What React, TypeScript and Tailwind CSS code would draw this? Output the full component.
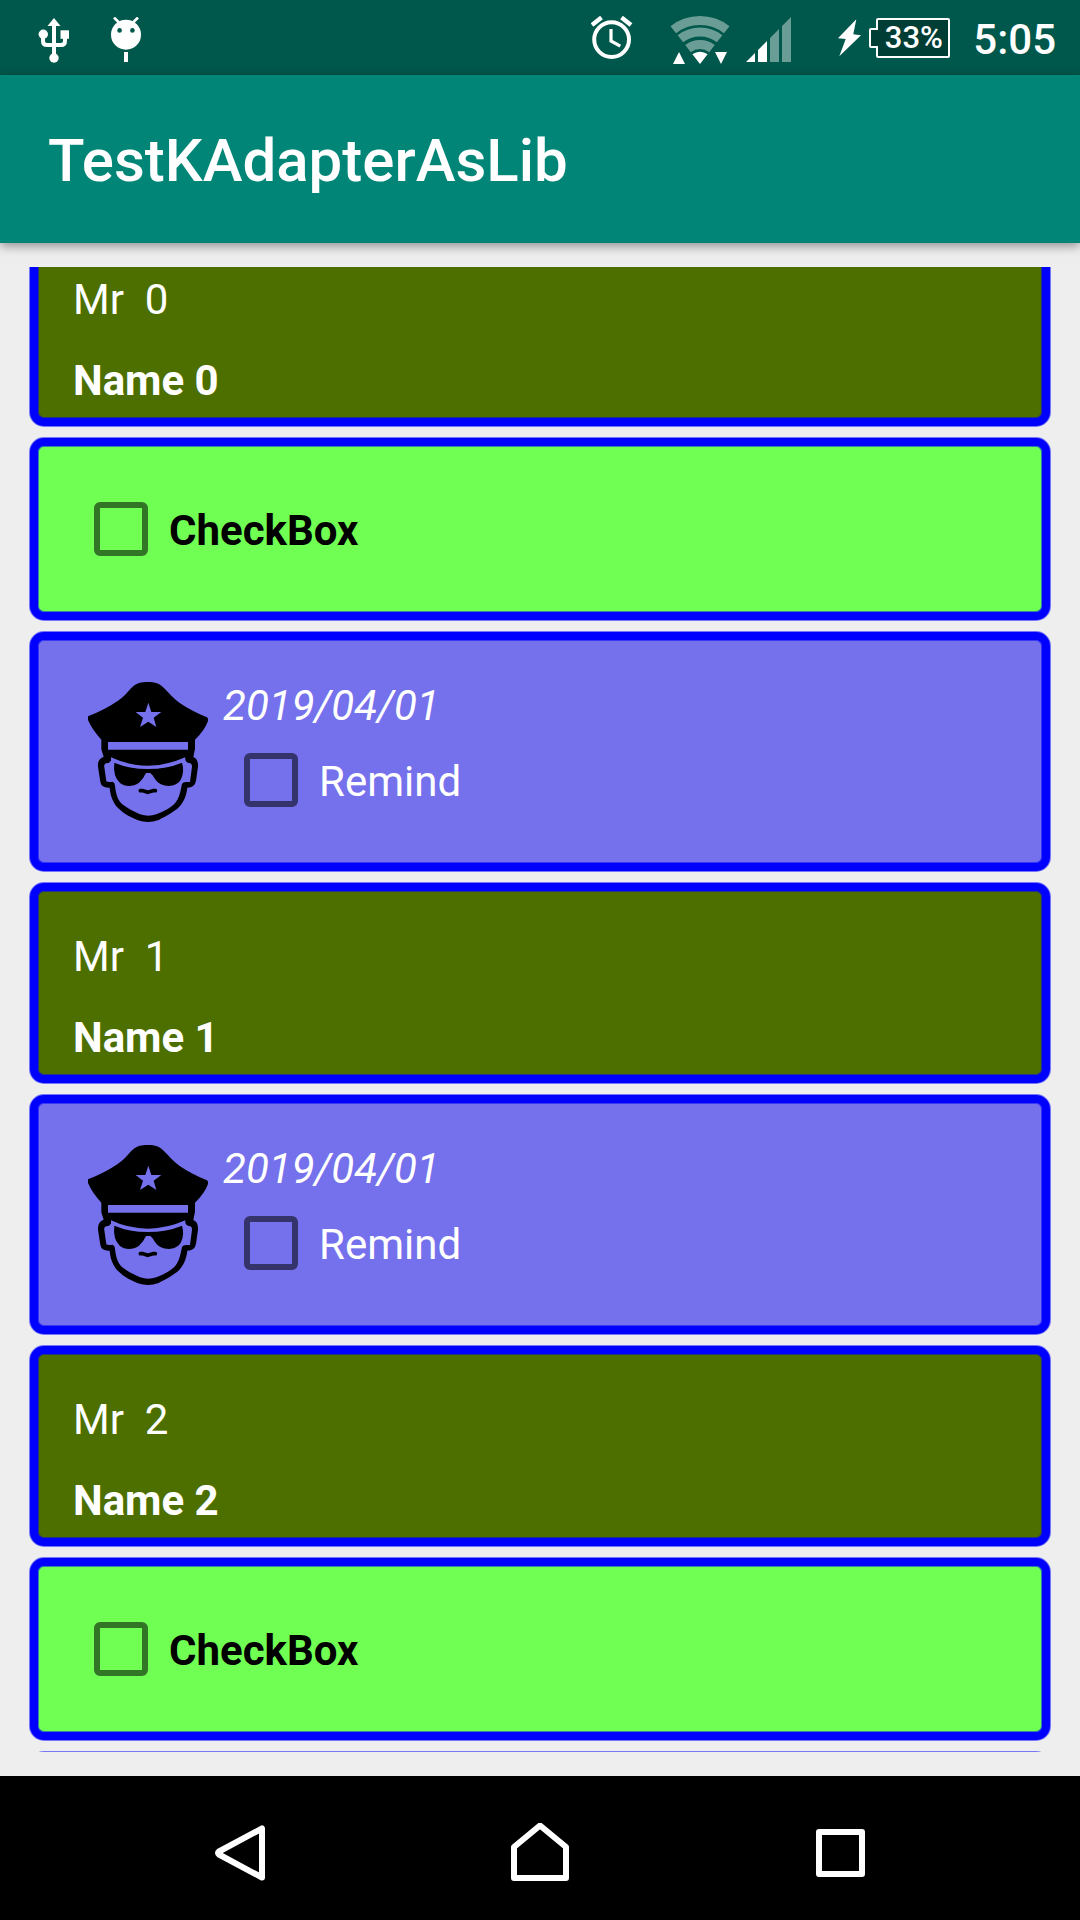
import type { ReactNode } from "react";

function UsbIcon() {
  return (
    <svg className="h-[46px] w-8" viewBox="38 16 32 46" fill="white" aria-label="USB connected">
      <path d="M54 17 60.5 25H47.5Z" />
      <path d="M54 24V57" stroke="white" strokeWidth="4" />
      <path d="M43 34V40Q43 44 47 44H61Q65 44 65 40V36" fill="none" stroke="white" strokeWidth="4" />
      <circle cx="43.3" cy="33.3" r="4.7" />
      <circle cx="54" cy="57" r="4.7" />
      <path d="M60.5 29.3H69V37.8H60.5Z" />
    </svg>
  );
}

function DebugIcon() {
  return (
    <svg className="h-[46px] w-8" viewBox="110 16 32 46" fill="white" aria-label="Debugging">
      <path d="M114 16.5 119.5 22M138 16.5 132.5 22" stroke="white" strokeWidth="2.6" />
      <circle cx="126" cy="33.7" r="15" />
      <circle cx="119.6" cy="29.4" r="2.3" fill="#00574b" />
      <circle cx="132.4" cy="29.4" r="2.3" fill="#00574b" />
      <path d="M124 51H128V61H124Z" />
    </svg>
  );
}

function AlarmIcon() {
  return (
    <svg className="h-[46px] w-[42px]" viewBox="31 15 42 46" fill="none" stroke="white" aria-label="Alarm set">
      <circle cx="51.6" cy="39.6" r="17.4" strokeWidth="4" />
      <path d="M32 25 41.5 17.5M71 25 61.5 17.5" strokeWidth="4.4" />
      <path d="M51 29V41L60.3 46.2" strokeWidth="3.2" />
    </svg>
  );
}

function WifiIcon() {
  return (
    <svg className="h-[50px] w-[60px]" viewBox="110 15 60 50" fill="none" aria-label="Wi-Fi">
      <g stroke="#6a9d95" strokeWidth="9">
        <path d="M113.3 29.7A43.5 43.5 0 0 1 166.7 29.7" />
        <path d="M120.4 38.8A32 32 0 0 1 159.6 38.8" />
        <path d="M128 48.6A19.5 19.5 0 0 1 152 48.6" />
      </g>
      <g fill="white">
        <path d="M140 64 132.4 54.3A12.3 12.3 0 0 1 147.6 54.3Z" />
        <path d="M113 64H125L119 52Z" />
        <path d="M155 52H167L161 64Z" />
      </g>
    </svg>
  );
}

function SignalIcon() {
  return (
    <svg className="h-[46px] w-[46px]" viewBox="186 16 46 46" aria-label="Mobile signal">
      <path d="M186 61H195V52ZM198 61V49L207 40V61Z" fill="white" />
      <path d="M210 61V37L219 28V61ZM222 61V25L231 16V61Z" fill="#6a9d95" />
    </svg>
  );
}

function BoltIcon() {
  return (
    <svg className="h-[38px] w-6" viewBox="28 18 24 38" fill="white" aria-label="Charging">
      <path d="M46.3 18.3 28 37.3 35.7 38 29.3 55.3 51 34.3 43.3 33.3Z" />
    </svg>
  );
}

function Battery() {
  return (
    <div className="relative ml-[7px] flex h-10 w-[81px] items-center justify-center pl-2">
      <svg className="absolute inset-0 h-10 w-[81px]" viewBox="0 0 81 40" aria-hidden="true">
        <path
          d="M9 1H79Q80 1 80 2V38Q80 39 79 39H9Q8 39 8 38V29H2Q1 29 1 28V12Q1 11 2 11H8V2Q8 1 9 1Z"
          fill="#003d35"
          stroke="white"
          strokeWidth="2"
        />
      </svg>
      <span className="relative text-[31px] leading-9 font-medium">33%</span>
    </div>
  );
}

function OfficerIcon() {
  return (
    <svg className="size-[147px] shrink-0" viewBox="45 87 441 441" aria-label="Officer">
      <path
        fillRule="evenodd"
        d="M84 199Q140 176 174 152C194 139 205 122 218 110C233 98 243 96 264 96C286 96 298 101 311 113C326 128 340 145 358 158C384 176 412 190 441 202Q445 205 444 213Q434 241 405 269V296L400 321C410 325 415 335 414 350L408 392Q404 413 382 413C379 440 369 462 350 478C328 494 313 501 296 510Q264 521 234 511C214 503 192 492 175 475C158 457 151 437 149 413Q125 415 121 396L114 350Q112 327 131 320L124 298V269Q96 238 84 210ZM144 276V299H384V276ZM265 158 256 186H227L249 203L240 231L265 215L289 231L281 203L304 186H274ZM153 322V332Q148 340 138 340Q131 342 133 352L139 394Q144 397 158 395Q165 398 165 407C168 436 175 454 191 466C207 478 226 486 240 493Q265 501 289 493C309 485 330 475 343 462C359 444 361 425 366 402Q369 395 381 396H390L396 350Q396 339 387 339Q374 337 376 322Q320 347 264 347Q205 347 153 322Z"
      />
      <path d="M163 338Q208 357 263 357Q321 357 366 338Q374 363 363 388C352 408 325 413 303 403Q287 394 279 377L271 369H258Q251 385 237 398C219 411 195 411 180 399Q158 378 163 338Z" />
      <path d="M241 422H249L263 427L279 422H286" fill="none" stroke="black" strokeWidth="11" strokeLinecap="round" strokeLinejoin="round" />
    </svg>
  );
}

function Card({ color, children }: { color: string; children?: ReactNode }) {
  return (
    <li
      className={`shrink-0 rounded-[14px] border-8 border-[#0000ff] shadow-[0_0_0_1px_#0000ff80,inset_0_0_0_1px_#0000ff80] first:-mt-[41px] ${color}`}
    >
      {children}
    </li>
  );
}

function CheckField({ label, bold }: { label: string; bold?: boolean }) {
  return (
    <label className="flex w-fit items-center gap-[21px]">
      <input
        type="checkbox"
        className="size-[54px] appearance-none rounded-md border-6 border-black/54 checked:bg-black/54"
      />
      <span className={bold ? "pt-0.5 font-bold text-black" : "pt-0.5"}>{label}</span>
    </label>
  );
}

function PersonCard({ index }: { index: number }) {
  return (
    <Card color="bg-[#4d6f00]">
      <div className="flex flex-col gap-8 px-[35px] pt-[41px] pb-[13px]">
        <p className="whitespace-pre">{`Mr  ${index}`}</p>
        <p className="font-bold">{`Name ${index}`}</p>
      </div>
    </Card>
  );
}

function CheckCard() {
  return (
    <Card color="bg-[#70ff53]">
      <div className="p-14">
        <CheckField label="CheckBox" bold />
      </div>
    </Card>
  );
}

function ReminderCard() {
  return (
    <Card color="bg-[#7570eb]">
      <div className="flex px-[37px] pt-[39px] pb-[37px]">
        <OfficerIcon />
        <div className="flex flex-col gap-[23px] pt-0.5">
          <time className="pl-px italic">2019/04/01</time>
          <div className="pl-[22px]">
            <CheckField label="Remind" />
          </div>
        </div>
      </div>
    </Card>
  );
}

export default function App() {
  return (
    <div className="flex h-screen flex-col bg-[#eeeeee] font-[Roboto,sans-serif] text-[42px] leading-[49px] text-white">
      <div className="flex h-[75px] shrink-0 items-center bg-[#00574b] pr-6 pl-[38px]">
        <div className="flex gap-10 pt-1">
          <UsbIcon />
          <DebugIcon />
        </div>
        <div className="ml-auto flex items-center">
          <AlarmIcon />
          <div className="ml-[37px] pt-1">
            <WifiIcon />
          </div>
          <div className="ml-4 pt-1">
            <SignalIcon />
          </div>
          <div className="ml-[46px]">
            <BoltIcon />
          </div>
          <Battery />
          <time className="ml-[23px] pt-1 font-medium">5:05</time>
        </div>
      </div>

      <header className="z-10 flex h-[168px] shrink-0 items-center bg-[#008577] px-12 shadow-[0_3px_10px_#00000066]">
        <h1 className="pt-1 text-[60px] leading-[70px] font-medium">TestKAdapterAsLib</h1>
      </header>

      <main className="flex min-h-0 flex-1 flex-col py-6">
        <ul className="flex min-h-0 flex-1 flex-col gap-3 overflow-hidden px-[30px]">
          <PersonCard index={0} />
          <CheckCard />
          <ReminderCard />
          <PersonCard index={1} />
          <ReminderCard />
          <PersonCard index={2} />
          <CheckCard />
          <Card color="bg-[#7570eb]">
            <div className="h-56" />
          </Card>
        </ul>
      </main>

      <nav className="flex h-36 shrink-0 items-center bg-black px-[90px] pt-2.5">
        <button aria-label="Back" className="flex flex-1 justify-center">
          <svg className="h-[60px] w-[60px]" viewBox="210 1823 60 60" fill="none" stroke="white" strokeWidth="6" strokeLinejoin="round">
            <path d="M262 1828.5V1877.5L219 1854.5Q217 1853 219 1851.5Z" />
          </svg>
        </button>
        <button aria-label="Home" className="flex flex-1 justify-center">
          <svg className="h-[60px] w-[60px]" viewBox="510 1823 60 60" fill="none" stroke="white" strokeWidth="6" strokeLinejoin="round">
            <path d="M540 1825.5 566 1847V1878H514V1847Z" />
          </svg>
        </button>
        <button aria-label="Recent apps" className="flex flex-1 justify-center">
          <svg className="h-[60px] w-[60px]" viewBox="810 1823 60 60" fill="none" stroke="white" strokeWidth="6" strokeLinejoin="round">
            <path d="M819 1832H862V1874H819Z" />
          </svg>
        </button>
      </nav>
    </div>
  );
}
